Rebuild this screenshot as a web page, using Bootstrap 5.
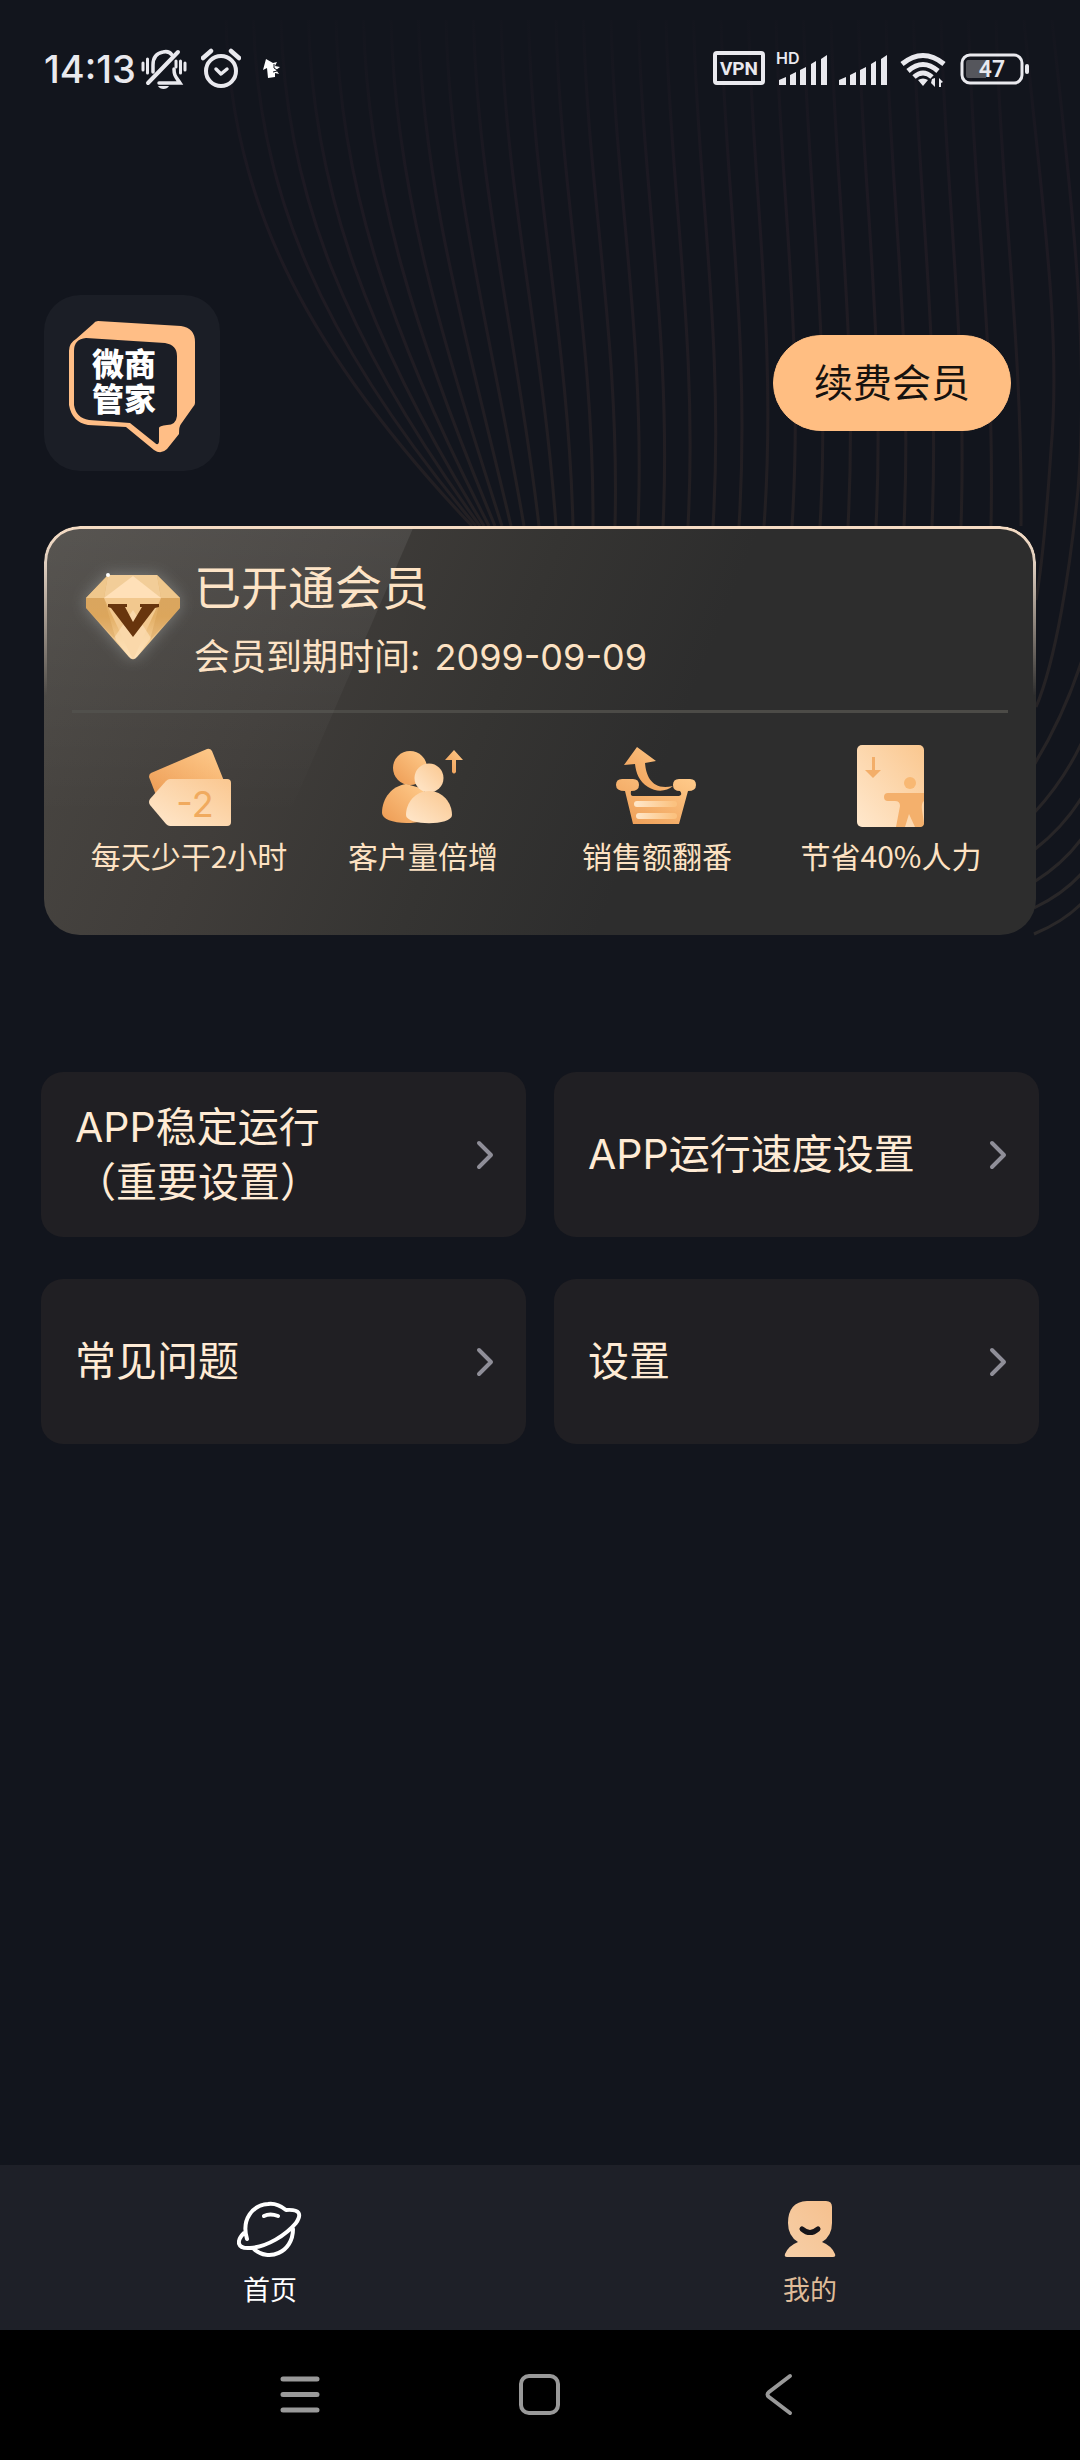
<!DOCTYPE html>
<html lang="zh-CN">
<head>
<meta charset="utf-8">
<meta name="viewport" content="width=device-width, initial-scale=1">
<title>我的</title>
<link href="https://cdn.jsdelivr.net/npm/bootstrap@5.3.0/dist/css/bootstrap.min.css" rel="stylesheet">
<style>
  :root { --cream: #fde2c3; --gold: #ffbe82; --ink: #12151d; }
  body { background: var(--ink); color: #fff; font-family: Inter, "Noto Sans CJK SC", sans-serif; }
  svg { display: block; flex: none; }
  .backdrop { position: absolute; top: 0; right: 0; z-index: 0; }
  .shell { position: relative; z-index: 1; }
  .statusbar { padding: 44px 50px 0 44px; height: 94px; }
  .status-left { gap: 14px; }
  .clock { font-size: 38px; line-height: 50px; font-weight: 500; color: #e9e9ee; margin-right: -9px; }
  .profile { padding: 201px 69px 0 44px; }
  .logo-tile { width: 176px; height: 176px; border-radius: 36px; background: #1b1e26; }
  .btn-renew { --bs-btn-bg: var(--gold); --bs-btn-color: #16120f; --bs-btn-border-color: var(--gold);
    --bs-btn-hover-bg: #ffb26c; --bs-btn-hover-color: #16120f; --bs-btn-hover-border-color: #ffb26c;
    width: 238px; height: 96px; font-size: 39px; line-height: 48px; }
  .vip { position: relative; margin: 55px 44px 0; padding: 32px 28px 60px; border-radius: 36px; overflow: hidden; color: var(--cream);
    background: linear-gradient(112deg, #4a4743 0%, #403d3a 25%, #353432 45%, #2d2d2d 62%); }
  .vip::before { content: ""; position: absolute; inset: 0; pointer-events: none;
    clip-path: polygon(0 0, 370px 0, 240px 300px, 0 300px);
    background: linear-gradient(180deg, rgba(255,255,255,.08), rgba(255,255,255,0) 290px); }
  .vip::after { content: ""; position: absolute; inset: 0; pointer-events: none; border-radius: 36px; padding: 3px;
    background: linear-gradient(180deg, #f6dcc4 0, #e0cfc0 36px, rgba(255,240,225,0) 170px);
    -webkit-mask: linear-gradient(#000 0 0) content-box, linear-gradient(#000 0 0);
    -webkit-mask-composite: xor; mask-composite: exclude; }
  .vip-head { padding: 0 12px 28px; gap: 12px; border-bottom: 3px solid #4c4b47; }
  .gem { margin-top: 12px; filter: drop-shadow(0 0 8px rgba(225,235,235,.3)); }
  .vip-title { font-size: 47px; line-height: 60px; font-weight: 400; }
  .vip-date { font-size: 36px; line-height: 50px; margin-top: 14px; }
  .perk { font-family: "Noto Sans CJK SC", sans-serif; font-size: 30px; line-height: 40px; padding-top: 32px; }
  .menu { margin: 95px 27px 0; --bs-gutter-x: 28px; --bs-gutter-y: 42px; }
  .menu-tile { height: 165px; border-radius: 22px; background: #201f23; color: #ffebd5; padding: 0 32px 0 34px;
    font-size: 41px; line-height: 55px; text-decoration: none; }
  .tabs { background: #1e2028; padding-top: 32px; height: 165px; }
  .tabs a { font-size: 27px; line-height: 36px; color: #fff; text-decoration: none; gap: 14px; }
  .tabs a.active { color: #dfbb98; }
  .sysbar { background: #000; height: 130px; padding: 0 258px; }
  .sysbar button { background: none; border: 0; padding: 0; width: 84px; height: 84px; display: grid; place-items: center; }
</style>
<script src="https://cdn.jsdelivr.net/npm/bootstrap@5.3.0/dist/js/bootstrap.bundle.min.js"></script>
</head>
<body>
<svg class="backdrop" width="1080" height="940" viewBox="0 0 1080 940" fill="none" aria-hidden="true">
  <defs>
    <linearGradient id="fade" gradientUnits="userSpaceOnUse" x1="0" y1="0" x2="0" y2="940">
      <stop offset="0" stop-color="#241c26" stop-opacity="0"/><stop offset=".2" stop-color="#241c26" stop-opacity=".6"/>
      <stop offset=".55" stop-color="#272224" stop-opacity=".8"/><stop offset="1" stop-color="#2a2829"/>
    </linearGradient>
  </defs>
  <g id="fan" stroke="url(#fade)" stroke-width="3"></g>
</svg>

<div class="shell d-flex flex-column min-vh-100">
  <header class="statusbar d-flex justify-content-between">
    <div class="status-left d-flex align-items-center">
      <span class="clock">14:13</span>
      <svg width="46" height="42" viewBox="0 0 46 42" fill="none" stroke="#e9e9ee" stroke-width="3" stroke-linecap="round">
        <path d="M2 15v7M6.500 11v14M44 15v7M39.500 13v12M35 13v6"/>
        <path d="M12 24V17C12 9 16 5 22 4c4-1 7 0 9 3M33 21c0 7 2 8 6 14H18" stroke-width="3.500"/>
        <path d="M37 4 7 35" stroke-width="4"/><path d="M17 38h11c-2 4-9 4-11 0z" fill="#e9e9ee" stroke="none"/>
      </svg>
      <svg width="40" height="42" viewBox="0 0 40 42" fill="none" stroke="#e9e9ee" stroke-linecap="round" stroke-linejoin="round">
        <circle cx="20" cy="23" r="15" stroke-width="4"/><path d="m15 21 5 5 6-5" stroke-width="3.500"/><path d="M2 10 10 3M30 3l8 7" stroke-width="4.500"/>
      </svg>
      <svg class="ms-2" width="18" height="20" viewBox="0 0 18 20"><path fill="#fff" d="M3 0 10 4 14 3 12 7 17 8 13 11 16 15 12 14 12 18 5 19 4 9 0 11z"/><path d="M11 5v4l3 2M10 13l4-1" stroke="#12151d" fill="none"/></svg>
    </div>
    <div class="d-flex align-items-center">
      <svg width="317" height="44" viewBox="0 0 317 44" fill="#e9e9ee" font-family="Inter, sans-serif">
        <rect x="2" y="6" width="48" height="30" rx="2" fill="none" stroke="#e9e9ee" stroke-width="4"/>
        <text x="26" y="28" text-anchor="middle" font-size="19" font-weight="700" font-family="Roboto, sans-serif">VPN</text>
        <text x="63" y="17" font-size="16" font-weight="600">HD</text>
        <path d="M66 38v-5l7-3v8zM77 38V28l6-3v13zM87 38V23l6-3v18zM98 38V17l5-3v24zM108 38V12l6-4v30z"/>
        <path d="M126 38v-5l7-3v8zM137 38V28l6-3v13zM147 38V23l6-3v18zM158 38V17l5-3v24zM168 38V12l6-4v30z"/>
        <g fill="none" stroke="#e9e9ee" stroke-width="5"><path d="M189 17Q210 0 231 17M195 24Q210 11 225 24M201 30Q210 22 219 30"/></g>
        <path d="M205 33q5-3 10 0l-5 6zM219 32l3-1v9l-4-4M226 40v-9l4 4-2 1v4z"/>
        <rect x="249" y="8" width="60" height="28" rx="8" fill="none" stroke="#e9e9ee" stroke-width="3"/>
        <path d="M255 13h18v18h-18q-2 0-2-3V16q0-3 2-3z" fill="#55565c"/><rect x="312" y="17" width="4" height="10" rx="2"/>
        <text x="279" y="30" text-anchor="middle" font-size="23" font-weight="600" font-family="Roboto, sans-serif">47</text>
      </svg>
    </div>
  </header>

  <main>
    <section class="profile d-flex justify-content-between align-items-center">
      <div class="logo-tile">
        <svg width="176" height="176" viewBox="0 0 176 176" role="img" aria-label="微商管家">
          <path fill="#ffbe86" d="M54 26 137 31Q151 33 151 47V108Q151 110 149 112L137 129Q135 131 135 139 L123 154Q117 160 110 155L82 132 44 130Q28 127 25 110V56Q25 48 32 44L49 29Q51 26 54 26Z"/>
          <path fill="#1b1e26" d="M42 43 121 48Q133 50 133 61V121Q132 130 123 130 115 131 115 133V147Q114 151 111 148L86 128 45 125Q32 123 30 110V56Q30 44 42 43Z"/>
          <g fill="#fff" font-family="'Noto Sans CJK SC', sans-serif" font-weight="900" font-size="32" text-anchor="middle"><text x="80" y="81">微商</text><text x="80" y="116">管家</text></g>
        </svg>
      </div>
      <button type="button" class="btn btn-renew rounded-pill">续费会员</button>
    </section>

    <section class="vip">
      <div class="vip-head d-flex align-items-start">
        <svg class="gem" width="98" height="92" viewBox="0 0 98 92">
          <defs><linearGradient id="gm" x1="0" y1="0" x2="0" y2="1"><stop offset="0" stop-color="#dcae6e"/><stop offset=".5" stop-color="#e3af66"/><stop offset="1" stop-color="#ffe0b2"/></linearGradient></defs>
          <path fill="url(#gm)" d="M24 5H73L96 28V38L53 87Q49 91 45 87L2 38V28Z"/>
          <path fill="#efc78c" d="M2 28 24 5 20 28z M73 5 96 28H77z"/><path fill="#f2cd98" d="M24 5H73L77 28H20z"/>
          <path fill="#ffe0b8" d="M49 6 77 28H20z"/><path fill="#f2c88e" d="M20 28H77L49 90z"/><path fill="#ffe3bc" d="M30 68 49 40 67 68 51 89h-4z" opacity=".6"/>
          <path fill="#c98c40" opacity=".25" d="M2 28H20L32 70 2 38zM96 28H77L66 70 96 38z"/>
          <path fill="#68350d" d="M24 34H43V37L41 37 49 52 58 37 56 37V34H75V37L71 38 49 67 27 38 24 37Z"/><circle cx="24" cy="5" r="2" fill="#fff"/>
        </svg>
        <div>
          <h1 class="vip-title mb-0">已开通会员</h1>
          <p class="vip-date mb-0">会员到期时间: <span class="ms-1">2099-09-09</span></p>
        </div>
      </div>
      <svg width="0" height="0" class="position-absolute"><defs>
        <linearGradient id="lt" x1="0" y1="1" x2="1" y2="0"><stop offset="0" stop-color="#ffe8cd"/><stop offset="1" stop-color="#fac78f"/></linearGradient>
        <linearGradient id="dk" x1="1" y1="0" x2="0" y2="1"><stop offset="0" stop-color="#ffcb8b"/><stop offset="1" stop-color="#ed9b53"/></linearGradient>
        <linearGradient id="st" x1="0" y1="0" x2="1" y2="0"><stop offset="0" stop-color="#ffe5c6"/><stop offset="1" stop-color="#fbc280"/></linearGradient>
      </defs></svg>
      <div class="row g-0 text-center">
        <div class="col-3 perk">
          <svg class="mx-auto" width="90" height="90" viewBox="0 0 90 90">
            <path fill="url(#dk)" d="M7 28 63 4Q66 3 68 6L80 36V50H12L5 32Q5 29 7 28Z"/><path fill="url(#lt)" d="M26 34H83Q87 34 87 38V77Q87 81 83 81H26Q24 81 22 79L6 60Q4 57 6 54L22 36Q24 34 26 34Z"/>
            <text x="51" y="72" text-anchor="middle" font-size="36" fill="#f0aa5e" font-family="Inter, sans-serif">-2</text>
          </svg>每天少干2小时
        </div>
        <div class="col-3 perk">
          <svg class="mx-auto" width="90" height="90" viewBox="0 0 90 90">
            <g fill="url(#dk)"><circle cx="32" cy="23" r="17"/><path d="M4 68C4 53 14 41 28 39L46 44V76C24 81 4 76 4 68Z"/><path d="M76 5 85 15H78V27Q76 30 74 27V15H67Z"/></g>
            <g fill="url(#lt)"><circle cx="51" cy="33" r="14.500"/><path d="M28 70C28 58 37 46 51 46S74 58 74 70C74 81 28 81 28 70Z"/></g>
          </svg>客户量倍增
        </div>
        <div class="col-3 perk">
          <svg class="mx-auto" width="90" height="90" viewBox="0 0 90 90">
            <path fill="url(#dk)" d="M25 2 44 16 33 18C34 31 40 46 61 41 54 47 44 47 36 42 27 36 24 28 23 19L12 20Z"/>
            <path fill="url(#dk)" d="M10 34H21Q27 34 27 40 27 46 19 46 18 51 21 51H67Q71 50 68 46 61 46 61 40 61 34 67 34H78Q84 34 84 40 84 46 76 46L67 79H21L13 46Q4 46 4 40 4 34 10 34Z"/>
            <path stroke="url(#st)" stroke-width="6" stroke-linecap="round" d="M25 59 62 59.010M27 71 62 71.010"/>
          </svg>销售额翻番
        </div>
        <div class="col-3 perk">
          <svg class="mx-auto" width="90" height="90" viewBox="0 0 90 90">
            <rect x="11" y="0" width="67" height="82" rx="5" fill="url(#lt)"/>
            <path fill="#f3ae69" d="M26 12h3V25H35L27 33 19 25H26z"/><circle cx="64" cy="38" r="6" fill="#f8b873"/>
            <path fill="#f4b06c" d="M42 48H78V56Q75 58 76 65L78 78Q78 82 74 82H69L63 69 59 82H50L54 61Q54 56 49 56H42Q38 56 38 52T42 48Z"/>
          </svg>节省40%人力
        </div>
      </div>
    </section>

    <nav class="row menu" aria-label="设置">
      <div class="col-6"><a href="#" class="menu-tile d-flex align-items-center justify-content-between"><span>APP稳定运行<br>（重要设置）</span><svg width="18" height="30" viewBox="0 0 18 30" fill="none" stroke="#8f8e98" stroke-width="4" stroke-linecap="round" stroke-linejoin="round"><path d="M3 3 15 15 3 27"/></svg></a></div>
      <div class="col-6"><a href="#" class="menu-tile d-flex align-items-center justify-content-between"><span>APP运行速度设置</span><svg width="18" height="30" viewBox="0 0 18 30" fill="none" stroke="#8f8e98" stroke-width="4" stroke-linecap="round" stroke-linejoin="round"><path d="M3 3 15 15 3 27"/></svg></a></div>
      <div class="col-6"><a href="#" class="menu-tile d-flex align-items-center justify-content-between"><span>常见问题</span><svg width="18" height="30" viewBox="0 0 18 30" fill="none" stroke="#8f8e98" stroke-width="4" stroke-linecap="round" stroke-linejoin="round"><path d="M3 3 15 15 3 27"/></svg></a></div>
      <div class="col-6"><a href="#" class="menu-tile d-flex align-items-center justify-content-between"><span>设置</span><svg width="18" height="30" viewBox="0 0 18 30" fill="none" stroke="#8f8e98" stroke-width="4" stroke-linecap="round" stroke-linejoin="round"><path d="M3 3 15 15 3 27"/></svg></a></div>
    </nav>
  </main>

  <footer class="mt-auto">
    <nav class="tabs nav nav-fill flex-nowrap align-items-start" aria-label="主导航">
      <a href="#" class="nav-item d-flex flex-column align-items-center">
        <svg width="66" height="62" viewBox="0 0 66 62" fill="none" stroke="#fff" stroke-width="4" stroke-linecap="round" stroke-linejoin="round">
          <path d="M10 42C4 22 16 8 31 7 38 6 44 9 49 13 63 12 65 17 59 26 49 38 30 50 13 51 0 52 -1 44 7 36M17 52C31 65 56 56 56 32M27 19Q33 16 41 19"/>
        </svg>首页
      </a>
      <a href="#" class="nav-item active d-flex flex-column align-items-center" aria-current="page">
        <svg width="66" height="62" viewBox="0 0 66 62">
          <defs><linearGradient id="me" x1="1" y1="0" x2="0" y2="1"><stop offset="0" stop-color="#f6c08d"/><stop offset="1" stop-color="#f6cfa8"/></linearGradient></defs>
          <path fill="url(#me)" d="M30 4H49Q55 4 55 10V26Q55 39 45 45 55 49 58 57 59 60 56 60H10Q7 60 8 57 11 49 21 45 11 39 11 26 11 5 30 4Z"/><path d="M25 32Q33 39 41 32" fill="none" stroke="#17151a" stroke-width="5" stroke-linecap="round"/>
        </svg>我的
      </a>
    </nav>
    <div class="sysbar d-flex justify-content-between align-items-center">
      <button type="button" aria-label="最近任务"><svg width="40" height="42" viewBox="0 0 40 42" stroke="#999" stroke-width="5" stroke-linecap="round"><path d="M3 5H37M3 20.500H37M3 36H37"/></svg></button>
      <button type="button" aria-label="主屏幕"><svg width="44" height="44" viewBox="0 0 44 44" fill="none" stroke="#999" stroke-width="4"><rect x="3" y="3" width="37" height="37" rx="8"/></svg></button>
      <button type="button" aria-label="返回"><svg width="30" height="44" viewBox="0 0 30 44" fill="none" stroke="#999" stroke-width="4" stroke-linecap="round" stroke-linejoin="round"><path d="M25 3 4 19Q1 21.500 4 24L25 40"/></svg></button>
    </div>
  </footer>
</div>
<script>
  // Fan of fine lines behind the header: near-vertical at the top, gathering towards the lower left.
  const ends = [472,476,480,484,489,495,502,511,524,539,556,573,593,615,638,663,688,713,739,764,792,820,848,876,904,932,961,991,1021];
  const paths = ends.map((x, i) => {
    const top = 226 + 27.5 * i;
    return `M${top} 20C${top + 4} 190 ${296 + 24 * i + 0.07 * i * i} 340 ${x} 526`;
  });
  // Lines that pass the right edge of the card.
  paths.push('M1024 20C1040 190 1062 330 1051 450 1047 510 1043 560 1036 600');
  paths.push('M1052 20C1070 190 1090 340 1078 490 1070 570 1056 660 1036 707');
  const tails = [[1082,660,765],[1082,742,813],[1082,797,850],[1082,838,882],[1082,873,908],[1082,903,934]];
  tails.forEach(([x, y, ey]) => paths.push(`M${x} ${y}Q1064 ${(y + ey) / 2 + 3} 1034 ${ey}`));
  document.getElementById('fan').innerHTML = paths.map(d => `<path d="${d}"/>`).join('');
</script>
</body>
</html>
